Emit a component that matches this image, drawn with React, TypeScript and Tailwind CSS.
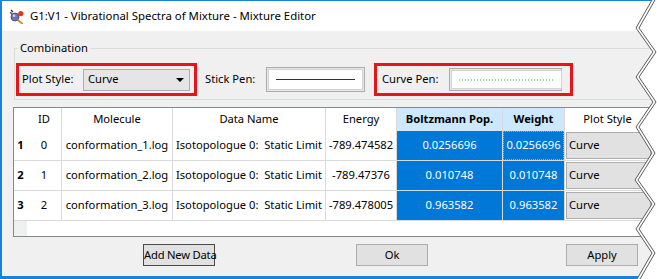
const rows = [
  { n: "1", id: "0", mol: "conformation_1.log", energy: "-789.474582", pop: "0.0256696", weight: "0.0256696" },
  { n: "2", id: "1", mol: "conformation_2.log", energy: "-789.47376", pop: "0.010748", weight: "0.010748" },
  { n: "3", id: "2", mol: "conformation_3.log", energy: "-789.478005", pop: "0.963582", weight: "0.963582" },
];

const grid = "grid grid-cols-[13px_35px_111px_153px_71px_106px_62px_86px_60px]";
const cell = "flex items-center justify-center border-r border-[#dadada] whitespace-pre";

function AppIcon() {
  return (
    <svg width="15" height="15" viewBox="0 0 15 15">
      <path d="M2 1l2 2M1 3.5l2 1" stroke="#222" strokeWidth="1.2" />
      <circle cx="6" cy="8" r="4" fill="#7073b8" stroke="#3b3f7a" strokeWidth="0.8" />
      <circle cx="5" cy="6.8" r="1.3" fill="#fff" opacity="0.7" />
      <circle cx="11.8" cy="4.6" r="2.6" fill="#e23a1c" />
      <path d="M9.2 11.2l3.8 3.2" stroke="#e08a1a" strokeWidth="2" strokeLinecap="round" />
    </svg>
  );
}

function TornEdge() {
  const pts = "25,0 9,28 26,52 9,77 26,102 9,127 25,153 8,180 25,204 9,229 25,253 10,279";
  const pts2 = "28,0 12,28 29,52 12,77 29,102 12,127 28,153 11,180 28,204 12,229 28,253 13,279";
  return (
    <svg className="absolute left-[627px] top-0" width="30" height="279" viewBox="0 0 30 279">
      <polygon points={`${pts} 30,279 30,0`} fill="#fff" />
      <polyline points={pts} fill="none" stroke="#5a5a5a" strokeWidth="1" />
      <polyline points={pts2} fill="none" stroke="#5a5a5a" strokeWidth="1" />
    </svg>
  );
}

export default function App() {
  return (
    <div className="relative w-[657px] h-[279px] overflow-hidden bg-white text-[11.2px] text-black font-['Noto_Sans',sans-serif]">
      <div className="flex h-full w-[690px] flex-col border-l-2 border-t border-[#1883d7]">
        <div className="flex h-[30px] shrink-0 items-center bg-white pl-[7px]">
          <AppIcon />
          <span className="ml-[6px] text-[11.4px]">G1:V1 - Vibrational Spectra of Mixture - Mixture Editor</span>
        </div>

        <div className="flex flex-1 flex-col bg-[#f0f0f0] pl-[11px] pt-[9px]">
          <fieldset className="ml-[1px] border border-[#dcdcdc]">
            <legend className="ml-[3px] px-[2px] leading-[16px]">Combination</legend>
            <div className="mt-[7px] mb-[3px] flex items-center">
              <div className="ml-[1px] flex h-[33px] w-[181px] items-center border-[3px] border-[#e8141b] pl-[3px]">
                <span>Plot Style:</span>
                <div className="ml-auto mr-[4px] flex h-[22px] w-[107px] items-center border border-[#adadad] bg-[#e5e5e5] pl-[4px]">
                  <span>Curve</span>
                  <svg className="ml-auto mr-[5px]" width="8" height="4" viewBox="0 0 8 4">
                    <path d="M0 0h8L4 4z" fill="#000" />
                  </svg>
                </div>
              </div>
              <span className="ml-[8px] w-[61px]">Stick Pen:</span>
              <div className="flex h-[25px] w-[99px] border border-[#adadad] bg-[#e6e6e6] p-[1px]">
                <div className="flex flex-1 items-center border border-[#d4d4d4] bg-white px-[7px]">
                  <div className="h-px flex-1 bg-[#333]" />
                </div>
              </div>
              <div className="ml-[9px] flex h-[33px] w-[199px] items-center border-[3px] border-[#e8141b] pl-[5px]">
                <span className="w-[67px]">Curve Pen:</span>
                <div className="flex h-[23px] w-[113px] border border-[#adadad] bg-[#e6e6e6] p-[1px]">
                  <div className="flex flex-1 items-center border border-[#d4d4d4] bg-white px-[7px]">
                    <svg width="95" height="2" viewBox="0 0 95 2">
                      <line x1="0" y1="1" x2="95" y2="1" stroke="#1fc01f" strokeWidth="1.2" strokeDasharray="1 2" />
                    </svg>
                  </div>
                </div>
              </div>
            </div>
          </fieldset>

          <div className="mt-[7px] flex h-[130px] flex-col border border-[#828790] bg-white">
            <div className={`${grid} h-[23px]`}>
              <div />
              <div className={cell}>ID</div>
              <div className={cell}>Molecule</div>
              <div className={cell}>Data Name</div>
              <div className={cell}>Energy</div>
              <div className={`${cell} bg-[#cce8ff] font-bold`}>Boltzmann Pop.</div>
              <div className={`${cell} bg-[#cce8ff] font-bold`}>Weight</div>
              <div className={cell}>Plot Style</div>
              <div />
            </div>
            {rows.map((r, i) => (
              <div key={r.n} className={`${grid} h-[30px] border-b border-[#dadada]`}>
                <div className="flex items-center justify-center font-bold">{r.n}</div>
                <div className={cell}>{r.id}</div>
                <div className={cell}>{r.mol}</div>
                <div className={cell}>{"Isotopologue 0:  Static Limit"}</div>
                <div className={cell}>{r.energy}</div>
                <div className={`${cell} bg-[#0078d7] text-white`}>{r.pop}</div>
                <div className={`${cell} bg-[#0078d7] text-white`}>
                  {i === 0 ? (
                    <div className="flex h-full w-full items-center justify-center outline-1 outline-dotted -outline-offset-1 outline-[#e89a50]">
                      {r.weight}
                    </div>
                  ) : (
                    r.weight
                  )}
                </div>
                <div className="flex py-[1px] pl-[1px]">
                  <div className="flex flex-1 items-center border border-[#adadad] bg-[#e1e1e1] pl-[2px]">Curve</div>
                </div>
                <div />
              </div>
            ))}
            <div className="flex flex-1">
              <div className="w-[13px] bg-[#f0f0f0]" />
            </div>
          </div>

          <div className="mt-[7px] flex">
            <button className="ml-[130px] h-[22px] w-[72px] whitespace-nowrap border border-[#4a4a4a] bg-[#e1e1e1] px-0 tracking-[-0.2px]">Add New Data</button>
            <button className="ml-[141px] h-[22px] w-[72px] border border-[#adadad] bg-[#e1e1e1]">Ok</button>
            <button className="ml-[138px] h-[22px] w-[72px] border border-[#adadad] bg-[#e1e1e1]">Apply</button>
          </div>
        </div>

        <div className="h-[3px] shrink-0 bg-[#1883d7]" />
      </div>
      <TornEdge />
    </div>
  );
}
